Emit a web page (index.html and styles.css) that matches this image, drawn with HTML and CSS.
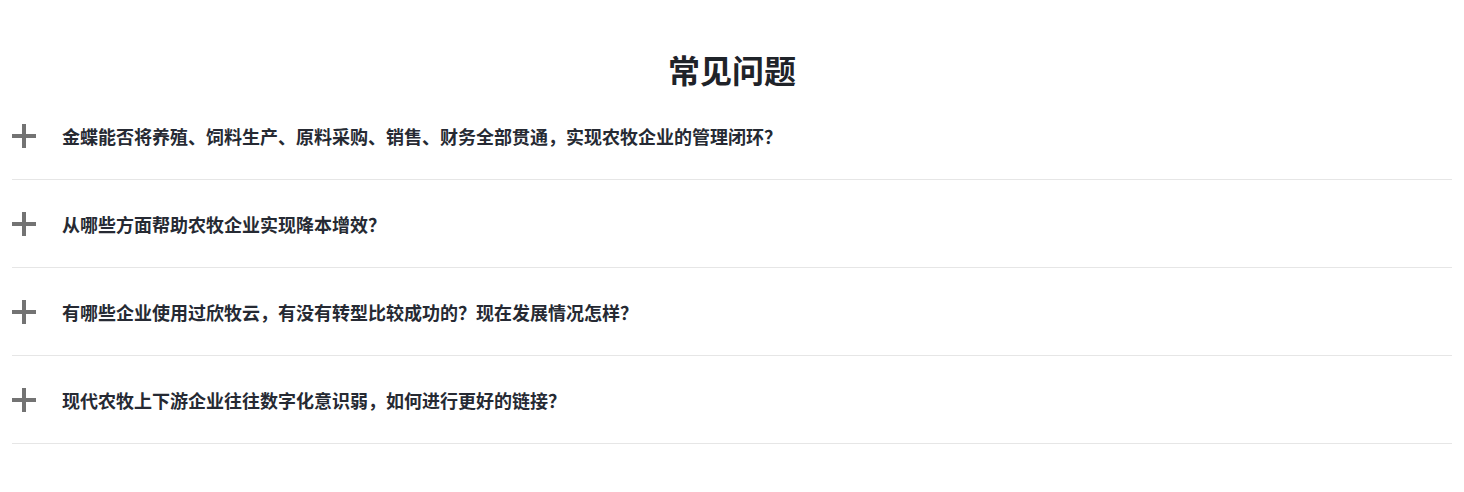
FILE: index.html
```html
<!DOCTYPE html>
<html lang="zh-CN">
<head>
    <meta charset="UTF-8">
    <meta name="viewport" content="width=device-width, initial-scale=1.0">
    <title>常见问题</title>
    <link rel="stylesheet" href="styles.css">
</head>
<body>

<section class="faq">
    <h2 class="faq-title">常见问题</h2>

    <div class="faq-list">
        <div class="faq-item">
            <span class="faq-icon"></span>
            <div class="faq-question">金蝶能否将养殖、饲料生产、原料采购、销售、财务全部贯通，实现农牧企业的管理闭环？</div>
        </div>
        <div class="faq-item">
            <span class="faq-icon"></span>
            <div class="faq-question">从哪些方面帮助农牧企业实现降本增效？</div>
        </div>
        <div class="faq-item">
            <span class="faq-icon"></span>
            <div class="faq-question">有哪些企业使用过欣牧云，有没有转型比较成功的？现在发展情况怎样？</div>
        </div>
        <div class="faq-item">
            <span class="faq-icon"></span>
            <div class="faq-question">现代农牧上下游企业往往数字化意识弱，如何进行更好的链接？</div>
        </div>
    </div>
</section>

</body>
</html>
```

FILE: styles.css
```css
body {
    margin: 0;
    padding: 0;
    background: #fff;
    font-family: "Noto Sans CJK SC", "Noto Sans", sans-serif;
    color: #222;
}
.faq {
    padding: 47px 12px 0;
}
.faq-title {
    margin: 0;
    font-size: 32px;
    line-height: 44px;
    font-weight: bold;
    text-align: center;
    color: #1f2329;
}
.faq-list {
    margin-top: 1px;
}
.faq-item {
    display: flex;
    align-items: center;
    height: 87px;
    border-bottom: 1px solid #e6e6e6;
}
.faq-icon {
    position: relative;
    width: 24px;
    height: 24px;
    flex-shrink: 0;
    margin-right: 26px;
}
.faq-icon::before, .faq-icon::after {
    content: "";
    position: absolute;
    background: #737373;
}
.faq-icon::before {
    left: 0;
    right: 0;
    top: 10px;
    height: 4px;
}
.faq-icon::after {
    top: 0;
    bottom: 0;
    left: 10px;
    width: 4px;
}
.faq-question {
    font-size: 18px;
    font-weight: bold;
    color: #262a33;
}
```
